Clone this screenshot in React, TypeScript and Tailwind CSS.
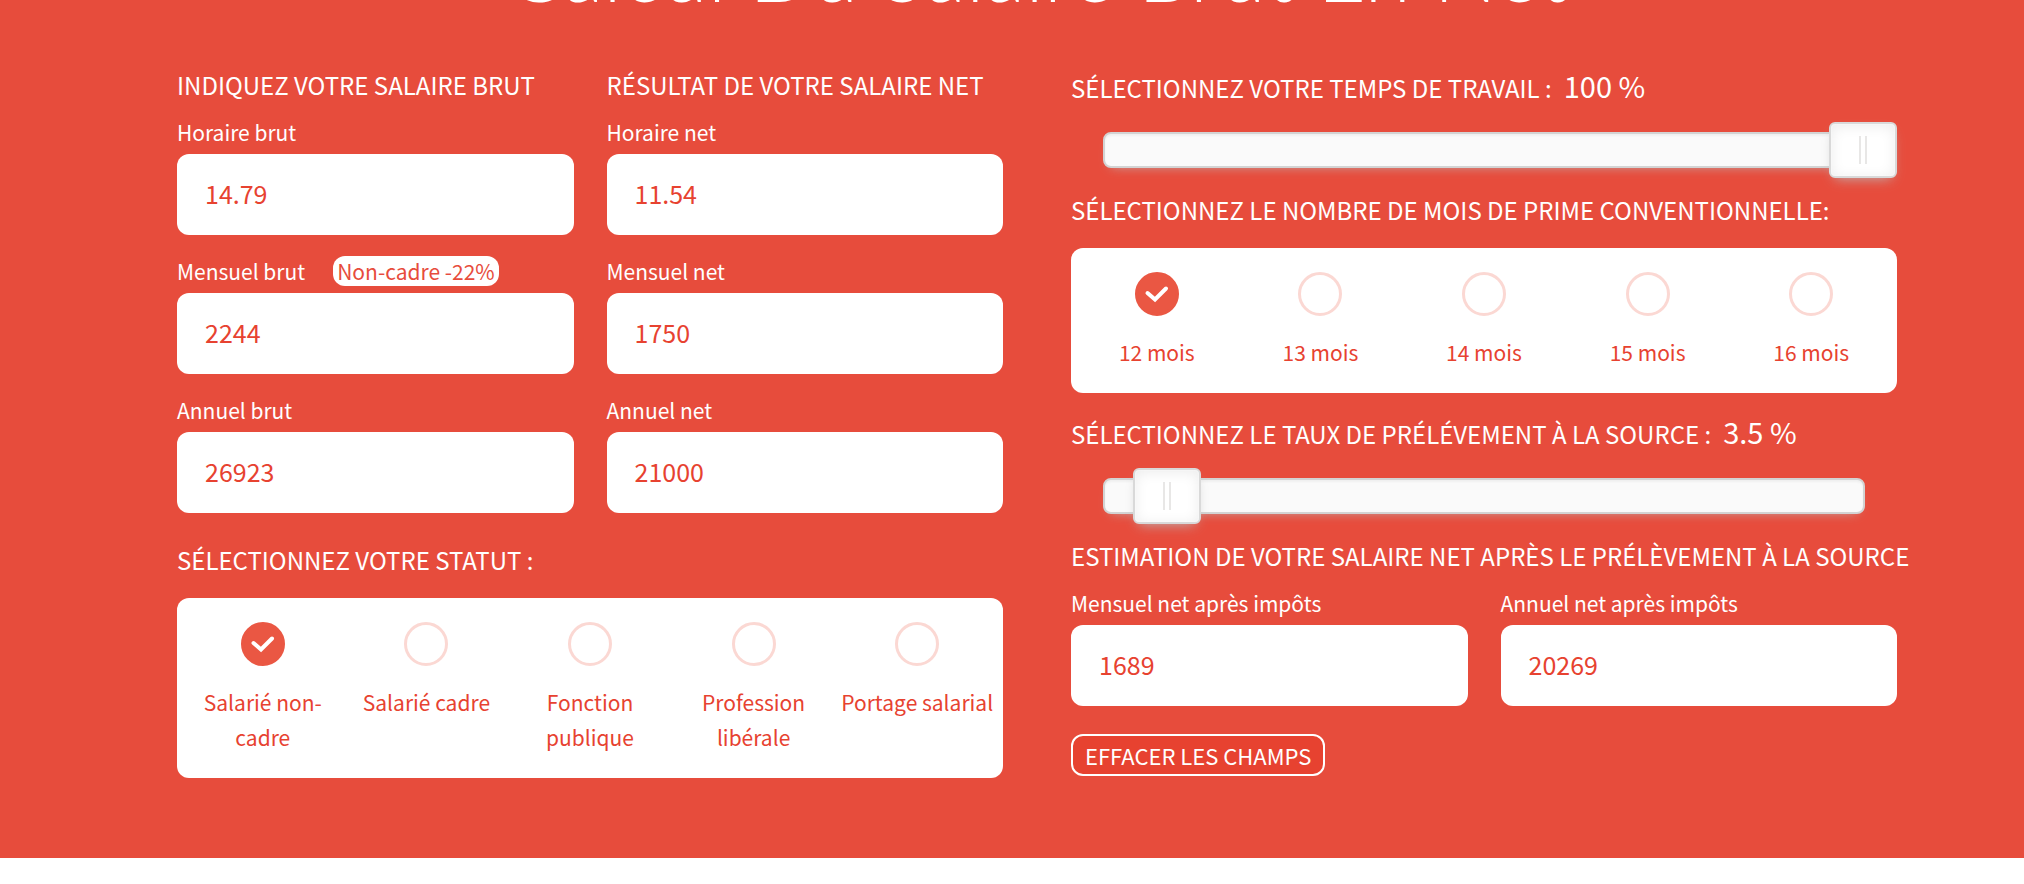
import { useState } from 'react';
import type { ReactNode } from 'react';

const STATUTS = ['Salarié non-cadre', 'Salarié cadre', 'Fonction publique', 'Profession libérale', 'Portage salarial'];
const MOIS = ['12 mois', '13 mois', '14 mois', '15 mois', '16 mois'];

function Heading({ children }: { children: ReactNode }) {
  return <h2 className="flex items-baseline gap-3 text-[24px] leading-10 whitespace-nowrap">{children}</h2>;
}

function Field({ id, label, value, badge }: { id: string; label: string; value: string; badge?: string }) {
  return (
    <div>
      <div className="mb-1.5 flex h-8 items-center gap-7">
        <label htmlFor={id} className="text-[21px] leading-8">
          {label}
        </label>
        {badge && (
          <span className="rounded-xl bg-white px-1 text-[21px] leading-[30px] text-[#e74c3c]">{badge}</span>
        )}
      </div>
      <input
        id={id}
        type="text"
        defaultValue={value}
        className="block h-[81px] w-full rounded-xl bg-white px-7 pb-1 text-[25px] text-[#e74230] outline-none"
      />
    </div>
  );
}

function RadioCard({ name, options }: { name: string; options: string[] }) {
  return (
    <div role="radiogroup" aria-label={name} className="mt-[18px] grid grid-cols-5 rounded-xl bg-white px-1 pt-6 pb-[23px]">
      {options.map((option, i) => (
        <label key={option} className="flex cursor-pointer flex-col items-center text-center text-[21px] leading-[35px] text-[#e74230]">
          <span className="relative mb-[19px] block size-11">
            <input
              type="radio"
              name={name}
              defaultChecked={i === 0}
              className="peer block size-11 appearance-none rounded-full border-[3px] border-[#fbd8d3] checked:border-[#ea5743] checked:bg-[#ea5743]"
            />
            {/* Coche blanche */}
            <svg viewBox="0 0 44 44" className="pointer-events-none absolute inset-0 hidden size-11 peer-checked:block">
              <path d="M12.5 21 L20 27.5 L31 16.5" fill="none" stroke="#fff" strokeWidth="4" strokeLinecap="round" />
            </svg>
          </span>
          {option}
        </label>
      ))}
    </div>
  );
}

type SliderProps = { label: string; value: number; max: number; step: number; onChange: (v: number) => void };

function Slider({ label, value, max, step, onChange }: SliderProps) {
  return (
    <div className="relative mt-3.5 mb-3 px-8 py-2.5">
      {/* Rail */}
      <div className="h-9 rounded-lg border-2 border-[#d3d3d3] bg-[#fafafa] shadow-[inset_0_2px_2px_#f0f0f0,0_6px_12px_-8px_#bbb]" />
      <input
        type="range"
        aria-label={label}
        min={0}
        max={max}
        step={step}
        value={value}
        onChange={(e) => onChange(Number(e.target.value))}
        className="absolute inset-0 h-14 w-full cursor-pointer appearance-none bg-transparent outline-none [&::-webkit-slider-thumb]:h-14 [&::-webkit-slider-thumb]:w-[68px] [&::-webkit-slider-thumb]:appearance-none [&::-webkit-slider-thumb]:rounded-md [&::-webkit-slider-thumb]:border-2 [&::-webkit-slider-thumb]:border-[#d9d9d9] [&::-webkit-slider-thumb]:bg-white [&::-webkit-slider-thumb]:bg-[linear-gradient(90deg,#e8e7e6_2px,transparent_2px,transparent_6px,#e8e7e6_6px)] [&::-webkit-slider-thumb]:bg-[length:8px_28px] [&::-webkit-slider-thumb]:bg-center [&::-webkit-slider-thumb]:bg-no-repeat [&::-webkit-slider-thumb]:shadow-[inset_0_0_2px_#fff,inset_0_2px_14px_#ebebeb,0_6px_12px_-6px_#bbb]"
      />
    </div>
  );
}

export default function App() {
  const [temps, setTemps] = useState(100);
  const [taux, setTaux] = useState(3.5);

  return (
    <div className="min-h-screen bg-white font-['Noto_Sans_CJK_SC',sans-serif]">
      <form className="overflow-hidden bg-[#e74c3c] pr-[127px] pb-20 pl-[177px] text-white">
        {/* Titre principal */}
        <h1 className="-mt-[74px] text-center font-['Lato',sans-serif] text-[84px] leading-[88px] font-light whitespace-nowrap">
          Calcul Du Salaire Brut En Net
        </h1>

        <div className="mt-[51px] grid grid-cols-2 gap-[68px]">
          {/* Brut, net et statut */}
          <div>
            <div className="grid grid-cols-2 gap-[33px]">
              <div>
                <Heading>INDIQUEZ VOTRE SALAIRE BRUT</Heading>
                <div className="mt-[11px] flex flex-col gap-5">
                  <Field id="horaire-brut" label="Horaire brut" value="14.79" />
                  <Field id="mensuel-brut" label="Mensuel brut" value="2244" badge="Non-cadre -22%" />
                  <Field id="annuel-brut" label="Annuel brut" value="26923" />
                </div>
              </div>
              <div>
                <Heading>RÉSULTAT DE VOTRE SALAIRE NET</Heading>
                <div className="mt-[11px] flex flex-col gap-5">
                  <Field id="horaire-net" label="Horaire net" value="11.54" />
                  <Field id="mensuel-net" label="Mensuel net" value="1750" />
                  <Field id="annuel-net" label="Annuel net" value="21000" />
                </div>
              </div>
            </div>
            <div className="mt-[27px]">
              <Heading>SÉLECTIONNEZ VOTRE STATUT :</Heading>
              <RadioCard name="statut" options={STATUTS} />
            </div>
          </div>

          {/* Temps de travail, primes et prélèvement */}
          <div>
            <Heading>
              SÉLECTIONNEZ VOTRE TEMPS DE TRAVAIL :<span className="text-[29px]">{temps} %</span>
            </Heading>
            <Slider label="Temps de travail" value={temps} max={100} step={10} onChange={setTemps} />

            <Heading>SÉLECTIONNEZ LE NOMBRE DE MOIS DE PRIME CONVENTIONNELLE:</Heading>
            <RadioCard name="mois" options={MOIS} />

            <div className="mt-[18px]">
              <Heading>
                SÉLECTIONNEZ LE TAUX DE PRÉLÉVEMENT À LA SOURCE :<span className="text-[29px]">{taux} %</span>
              </Heading>
            </div>
            <Slider label="Taux de prélèvement" value={taux} max={43} step={0.5} onChange={setTaux} />

            <Heading>ESTIMATION DE VOTRE SALAIRE NET APRÈS LE PRÉLÈVEMENT À LA SOURCE</Heading>
            <div className="mt-[11px] grid grid-cols-2 gap-[33px]">
              <Field id="mensuel-impots" label="Mensuel net après impôts" value="1689" />
              <Field id="annuel-impots" label="Annuel net après impôts" value="20269" />
            </div>
            <button
              type="reset"
              className="mt-7 h-[42px] cursor-pointer rounded-xl border-2 border-white bg-[#e74230] px-3 text-[22px] leading-9"
            >
              EFFACER LES CHAMPS
            </button>
          </div>
        </div>
      </form>
    </div>
  );
}
